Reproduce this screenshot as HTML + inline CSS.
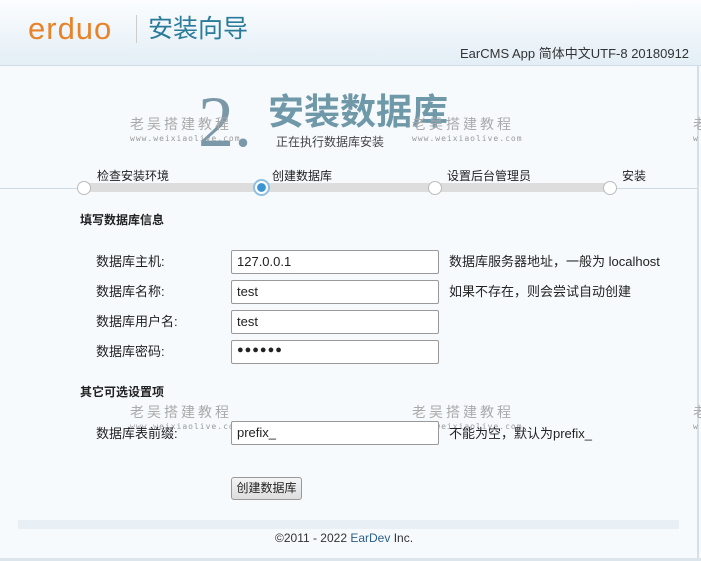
<!DOCTYPE html>
<html><head><meta charset="utf-8"><style>
*{margin:0;padding:0;box-sizing:border-box}
body{width:701px;height:561px;overflow:hidden;background:#f7fafd;font-family:"Liberation Sans","Noto Sans CJK SC",sans-serif;font-size:13px;color:#222;position:relative}
.a{position:absolute;white-space:nowrap;line-height:1.2}
.hdr{position:absolute;left:0;top:0;width:701px;height:66px;background:linear-gradient(#fbfdfe,#e3eef6);border-bottom:1px solid #cfdde8}
.inp{position:absolute;left:231px;width:208px;height:24px;border:1px solid #999;background:#fff;border-radius:2px;padding:3px 5px;font-size:13px}
.wm{position:absolute;color:#aaa;font-size:14px;letter-spacing:3px;white-space:nowrap}
.wm small{display:block;font-size:8px;letter-spacing:1px;color:#999;font-family:"DejaVu Sans Mono",monospace}
.dot{position:absolute;width:14px;height:14px;border-radius:50%;background:#fff;border:1px solid #bbb;top:181px}
</style></head><body>
<div class="hdr"></div>
<div class="a" style="left:28px;top:10px;font-size:31px;color:#e8832a;letter-spacing:1px">erduo</div>
<div class="a" style="left:136px;top:15px;width:1px;height:28px;background:#ccc"></div>
<div class="a" style="left:148px;top:14px;font-size:25px;color:#2a7a9a">安装向导</div>
<div class="a" style="left:460px;top:46px;font-size:13px;color:#333">EarCMS App 简体中文UTF-8 20180912</div>
<div class="a" style="left:697px;top:66px;width:2px;height:495px;background:#d6dfe6"></div>
<div class="a" style="left:198px;top:86px;font-size:72px;color:#7a98a8;font-family:'Liberation Serif',serif;line-height:1">2.</div>
<div class="a" style="left:268px;top:90px;font-size:36px;font-weight:bold;color:#6f98a8">安装数据库</div>
<div class="a" style="left:276px;top:135px;font-size:12px;color:#444">正在执行数据库安装</div>
<div class="wm" style="left:130px;top:114px">老吴搭建教程<small>www.weixiaolive.com</small></div>
<div class="wm" style="left:412px;top:114px">老吴搭建教程<small>www.weixiaolive.com</small></div>
<div class="wm" style="left:693px;top:114px">老<small>w</small></div>
<div class="a" style="left:0;top:188px;width:697px;height:1px;background:#cfdbe3"></div>
<div class="a" style="left:85px;top:183px;width:525px;height:9px;background:#ddd"></div>
<div class="a" style="left:97px;top:169px;font-size:12px">检查安装环境</div>
<div class="a" style="left:272px;top:169px;font-size:12px">创建数据库</div>
<div class="a" style="left:447px;top:169px;font-size:12px">设置后台管理员</div>
<div class="a" style="left:622px;top:169px;font-size:12px">安装</div>
<div class="dot" style="left:77px"></div>
<div class="dot" style="left:253px;width:17px;height:17px;top:179px;border:2px solid #8fc0e0;background:radial-gradient(#3b95d4 45%,#fff 50%)"></div>
<div class="dot" style="left:428px"></div>
<div class="dot" style="left:603px"></div>
<div class="a" style="left:80px;top:213px;font-weight:bold;font-size:12px">填写数据库信息</div>
<div class="a" style="left:96px;top:254px">数据库主机:</div>
<div class="inp" style="top:250px">127.0.0.1</div>
<div class="a" style="left:449px;top:254px">数据库服务器地址，一般为 localhost</div>
<div class="a" style="left:96px;top:284px">数据库名称:</div>
<div class="inp" style="top:280px">test</div>
<div class="a" style="left:449px;top:284px">如果不存在，则会尝试自动创建</div>
<div class="a" style="left:96px;top:314px">数据库用户名:</div>
<div class="inp" style="top:310px">test</div>
<div class="a" style="left:96px;top:344px">数据库密码:</div>
<div class="inp" style="top:340px;font-size:11px;letter-spacing:1px">●●●●●●</div>
<div class="a" style="left:80px;top:385px;font-weight:bold;font-size:12px">其它可选设置项</div>
<div class="wm" style="left:130px;top:402px">老吴搭建教程<small>www.weixiaolive.com</small></div>
<div class="wm" style="left:412px;top:402px">老吴搭建教程<small>www.weixiaolive.com</small></div>
<div class="wm" style="left:693px;top:402px">老<small>w</small></div>
<div class="a" style="left:96px;top:426px">数据库表前缀:</div>
<div class="inp" style="top:421px">prefix_</div>
<div class="a" style="left:449px;top:426px">不能为空，默认为prefix_</div>
<div class="a" style="left:231px;top:477px;width:71px;height:23px;border:1px solid #999;border-radius:3px;background:linear-gradient(#f4f4f4,#ddd);font-size:12px;text-align:center;line-height:21px">创建数据库</div>
<div class="a" style="left:18px;top:520px;width:661px;height:9px;background:#e8eff5"></div>
<div class="a" style="left:275px;top:531px;font-size:12px;color:#333">©2011 - 2022 <span style="color:#2a5f8a">EarDev</span> Inc.</div>
<div class="a" style="left:0;top:558px;width:701px;height:3px;background:#dde5ec"></div>
</body></html>
